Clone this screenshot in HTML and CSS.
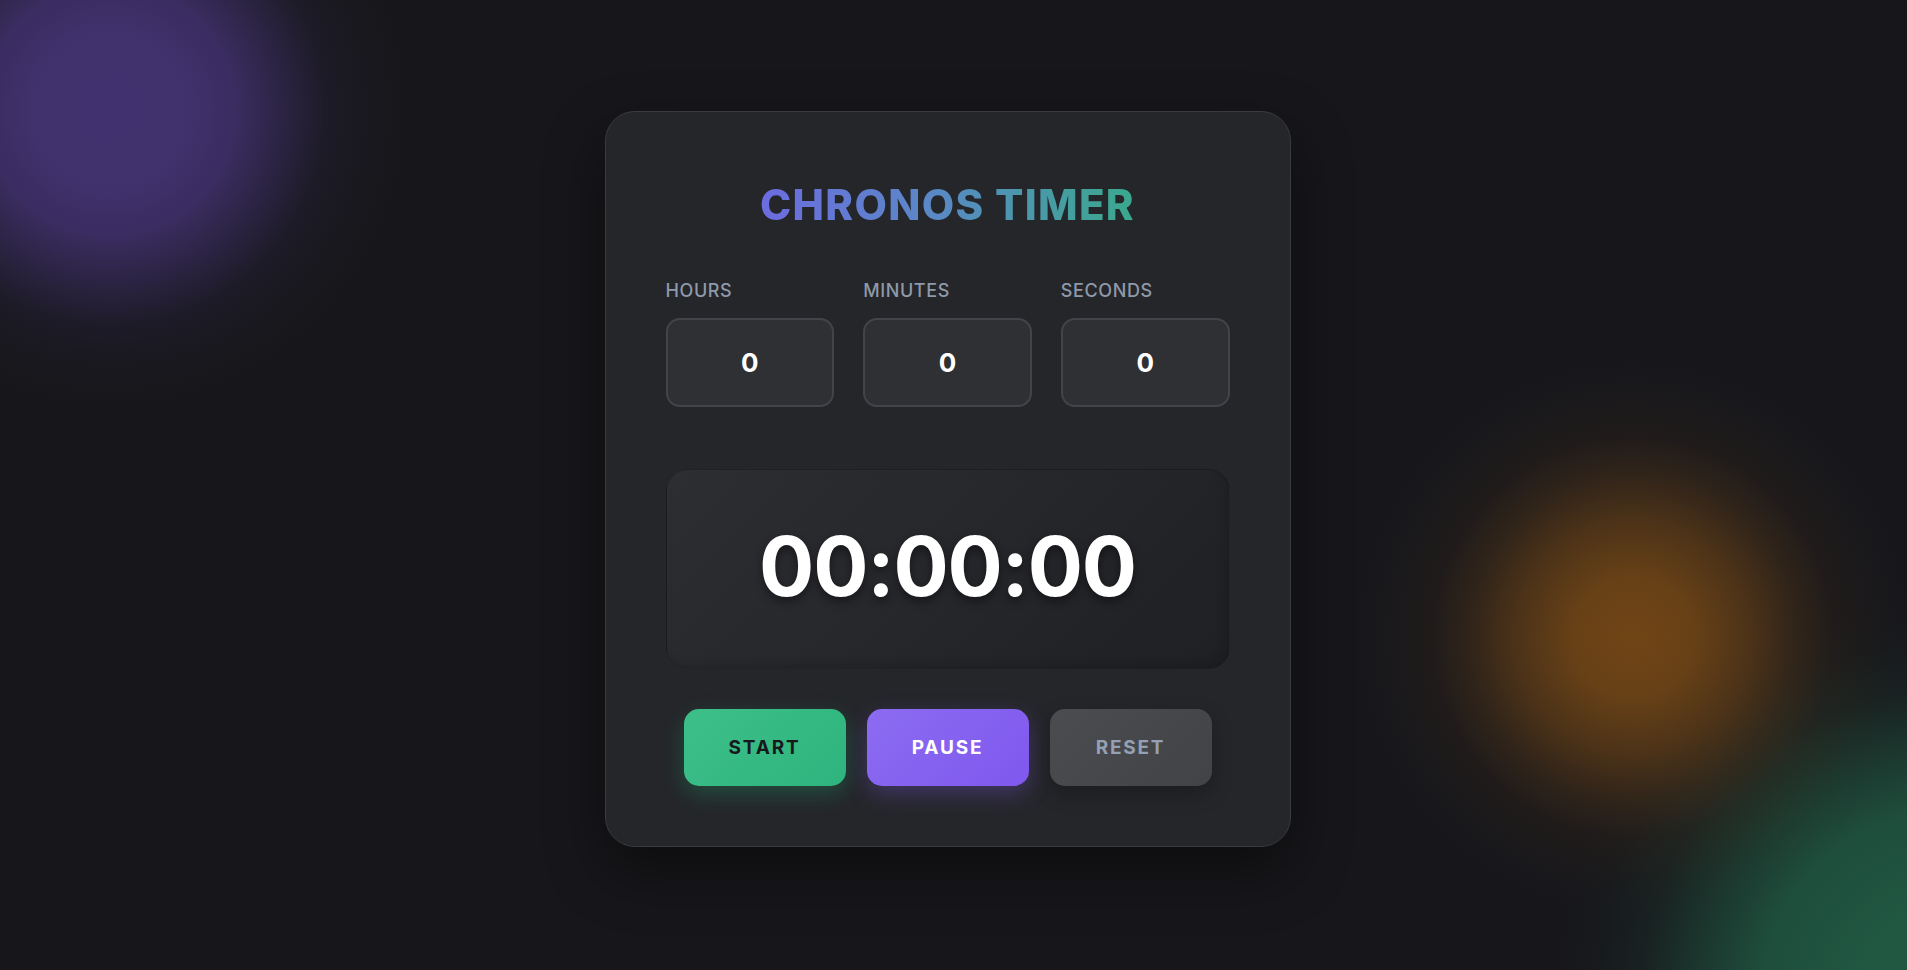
FILE: index.html
```html
<!DOCTYPE html>
<html lang="en">
<head>
<meta charset="utf-8">
<title>Chronos Timer</title>
<link rel="stylesheet" href="styles.css">
</head>
<body class="page">
  <main class="card">
    <h1 class="title">CHRONOS TIMER</h1>

    <div class="inputs">
      <label class="field">
        <span class="field-label">HOURS</span>
        <input class="field-input" type="number" value="0" min="0">
      </label>
      <label class="field">
        <span class="field-label">MINUTES</span>
        <input class="field-input" type="number" value="0" min="0">
      </label>
      <label class="field">
        <span class="field-label">SECONDS</span>
        <input class="field-input" type="number" value="0" min="0">
      </label>
    </div>

    <div class="display">
      <span class="time">00:00:00</span>
    </div>

    <div class="controls">
      <button class="btn btn-start">START</button>
      <button class="btn btn-pause">PAUSE</button>
      <button class="btn btn-reset">RESET</button>
    </div>
  </main>
</body>
</html>
```

FILE: styles.css
```css
* {
  box-sizing: border-box;
}

html, body {
  margin: 0;
  height: 100%;
}

.page {
  background-color: #17171b;
  background-image:
    radial-gradient(circle at 110px 110px,
      rgba(65, 49, 110, 1) 0px,
      rgba(65, 49, 110, 0.98) 80px,
      rgba(65, 49, 110, 0.84) 125px,
      rgba(65, 49, 110, 0.5) 170px,
      rgba(65, 49, 110, 0.16) 215px,
      rgba(65, 49, 110, 0.03) 260px,
      rgba(65, 49, 110, 0) 300px),
    radial-gradient(circle at 1633px 637px,
      rgba(112, 69, 22, 1) 0px,
      rgba(112, 69, 22, 0.9) 60px,
      rgba(112, 69, 22, 0.6) 116px,
      rgba(112, 69, 22, 0.3) 160px,
      rgba(112, 69, 22, 0.1) 200px,
      rgba(112, 69, 22, 0.02) 250px,
      rgba(112, 69, 22, 0) 280px),
    radial-gradient(circle at 1950px 1000px,
      rgba(32, 88, 66, 1) 0px,
      rgba(32, 88, 66, 1) 90px,
      rgba(32, 88, 66, 0.84) 190px,
      rgba(32, 88, 66, 0.5) 250px,
      rgba(32, 88, 66, 0.16) 310px,
      rgba(32, 88, 66, 0.03) 360px,
      rgba(32, 88, 66, 0) 400px);
  background-repeat: no-repeat;
  font-family: Inter, "Noto Sans", sans-serif;
  color: #fff;
  display: flex;
  align-items: center;
  justify-content: center;
  padding: 0 12px 13px 0;
  overflow: hidden;
}

.card {
  width: 686px;
  padding: 60px;
  background: #25262a;
  border: 1px solid #3a3b40;
  border-radius: 30px;
  box-shadow: 0 24px 60px rgba(0, 0, 0, 0.45);
  display: flex;
  flex-direction: column;
}

.title {
  margin: 0;
  font-size: 42px;
  font-weight: 800;
  line-height: 66px;
  letter-spacing: 1.3px;
  text-align: center;
  background: linear-gradient(90deg, #6c6ce0 0%, #5a88c6 45%, #3aa98c 100%);
  -webkit-background-clip: text;
  background-clip: text;
  color: transparent;
  align-self: center;
}

.inputs {
  margin-top: 42px;
  display: grid;
  grid-template-columns: repeat(3, 1fr);
  gap: 29px;
}

.field {
  display: flex;
  flex-direction: column;
  gap: 16px;
}

.field-label {
  font-size: 18px;
  line-height: 22px;
  font-weight: 500;
  letter-spacing: 0.6px;
  color: #8e99aa;
}

.field-input {
  width: 100%;
  height: 89px;
  background: #2f3034;
  border: 2px solid #434449;
  border-radius: 14px;
  color: #fff;
  font-family: Inter, "Noto Sans", sans-serif;
  font-size: 26px;
  font-weight: 700;
  text-align: center;
  outline: none;
  -moz-appearance: textfield;
  appearance: textfield;
}

.field-input::-webkit-inner-spin-button,
.field-input::-webkit-outer-spin-button {
  -webkit-appearance: none;
  margin: 0;
}

.display {
  margin-top: 62px;
  height: 200px;
  border-radius: 22px;
  background: linear-gradient(135deg, #2d2e32 0%, #26272b 50%, #1f2023 100%);
  border: 1px solid rgba(0, 0, 0, 0.18);
  box-shadow: inset 2px 2px 6px rgba(255, 255, 255, 0.02), inset -4px -4px 10px rgba(0, 0, 0, 0.15);
  display: flex;
  align-items: center;
  justify-content: center;
}

.time {
  font-size: 82px;
  font-weight: 700;
  letter-spacing: -1.2px;
  line-height: 1;
  color: #fff;
  text-shadow: 0 4px 10px rgba(0, 0, 0, 0.45);
  margin-top: -4px;
}

.controls {
  margin-top: 40px;
  display: flex;
  justify-content: center;
  gap: 21px;
}

.btn {
  width: 162px;
  height: 77px;
  border: none;
  border-radius: 15px;
  font-family: Inter, "Noto Sans", sans-serif;
  font-size: 19px;
  font-weight: 700;
  letter-spacing: 1.8px;
  cursor: pointer;
}

.btn-start {
  background: linear-gradient(135deg, #3dbf89 0%, #2eb47e 100%);
  color: #18191c;
  box-shadow: 0 8px 22px rgba(30, 180, 120, 0.28);
}

.btn-pause {
  background: linear-gradient(135deg, #8c6cf1 0%, #7f58ee 100%);
  color: #fff;
  box-shadow: 0 8px 22px rgba(130, 90, 240, 0.3);
}

.btn-reset {
  background: linear-gradient(135deg, #4b4c50 0%, #424347 100%);
  color: #94a0b3;
  box-shadow: 0 8px 20px rgba(0, 0, 0, 0.25);
}
```
